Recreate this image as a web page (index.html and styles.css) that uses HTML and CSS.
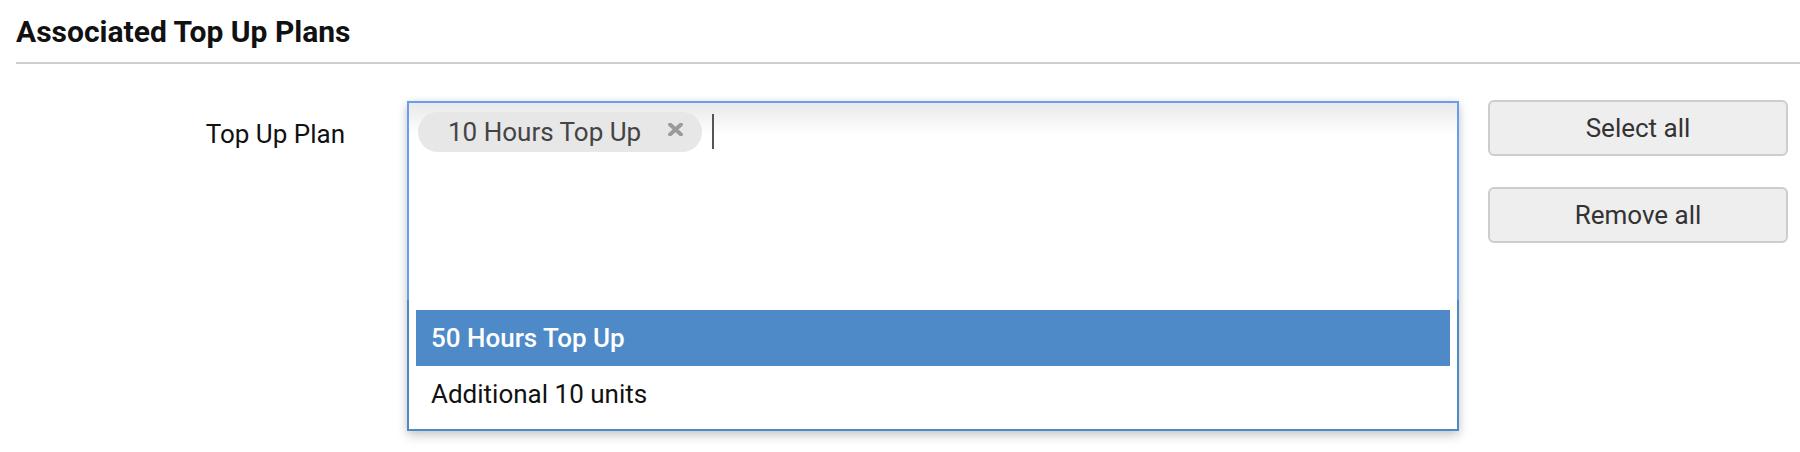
FILE: index.html
```html
<!DOCTYPE html>
<html>
<head>
<meta charset="utf-8">
<title>Associated Top Up Plans</title>
<link rel="stylesheet" href="styles.css">
</head>
<body>
<div class="section">
  <h2 class="section-title">Associated Top Up Plans</h2>
  <div class="form-row">
    <label class="field-label">Top Up Plan</label>
    <div class="chosen">
      <div class="choices">
        <span class="chip"><span class="chip-text">10 Hours Top Up</span><svg class="chip-x" width="15" height="13" viewBox="0 0 15 13"><path d="M2 1.5 L13 11.5 M13 1.5 L2 11.5" stroke="#9a9a9a" stroke-width="3.8" stroke-linecap="round"/></svg></span>
        <span class="caret"></span>
      </div>
      <div class="drop">
        <ul class="results">
          <li class="result highlighted">50 Hours Top Up</li>
          <li class="result">Additional 10 units</li>
        </ul>
      </div>
    </div>
    <div class="actions">
      <button class="btn">Select all</button>
      <button class="btn">Remove all</button>
    </div>
  </div>
</div>
</body>
</html>
```
FILE: styles.css
```css
html, body {
  margin: 0;
  padding: 0;
  background: #fff;
}
body {
  font-family: Roboto, "Liberation Sans", Arial, sans-serif;
  font-size: 26px;
  color: #111;
  width: 1800px;
  height: 452px;
  overflow: hidden;
}
.section-title {
  margin: 0 0 0 16px;
  padding: 15px 0 13px 0;
  font-size: 30px;
  line-height: 34px;
  font-weight: 700;
  color: #111;
  border-bottom: 2px solid #cfcfcf;
}
.form-row {
  display: flex;
  align-items: flex-start;
  margin-top: 36px;
}
.field-label {
  width: 345px;
  text-align: right;
  padding-top: 19px;
  line-height: 30px;
  color: #111;
  flex: none;
}
.chosen {
  margin-left: 62px;
  margin-top: 1px;
  width: 1052px;
  flex: none;
  box-shadow: 0 5px 10px rgba(0, 0, 0, 0.18), 0 0 8px rgba(0, 0, 0, 0.08);
}
.choices {
  box-sizing: border-box;
  height: 199px;
  border: 2px solid #6a9cf2;
  border-bottom: 0;
  padding: 9px;
  background: linear-gradient(#eaeaea 1%, #fff 16%);
  display: flex;
  align-items: flex-start;
}
.chip {
  display: inline-flex;
  align-items: center;
  height: 40px;
  width: 284px;
  box-sizing: border-box;
  padding: 0 19px 0 30px;
  border-radius: 20px;
  background: #e7e7e7;
  color: #444;
  line-height: 40px;
}
.chip-text {
  flex: 1;
  white-space: nowrap;
}
.chip-x {
  display: block;
  margin-top: -6px;
}
.caret {
  width: 2px;
  height: 35px;
  background: #555;
  margin: 2px 0 0 10px;
}
.drop {
  border: 2px solid #5088c8;
  border-top: 0;
  background: #fff;
}
.results {
  list-style: none;
  margin: 0;
  padding: 10px 7px 7px 7px;
}
.result {
  height: 56px;
  line-height: 56px;
  padding-left: 15px;
  color: #111;
  white-space: nowrap;
}
.result.highlighted {
  background: #4f8ac8;
  color: #fff;
  font-weight: 500;
}
.actions {
  margin-left: 29px;
  width: 300px;
  display: flex;
  flex-direction: column;
  gap: 31px;
  flex: none;
}
.btn {
  height: 56px;
  width: 300px;
  border: 2px solid #cdcdcd;
  border-radius: 6px;
  background: #eeeeee;
  font-family: Roboto, "Liberation Sans", Arial, sans-serif;
  font-size: 26px;
  color: #333;
  padding: 0;
}
```
